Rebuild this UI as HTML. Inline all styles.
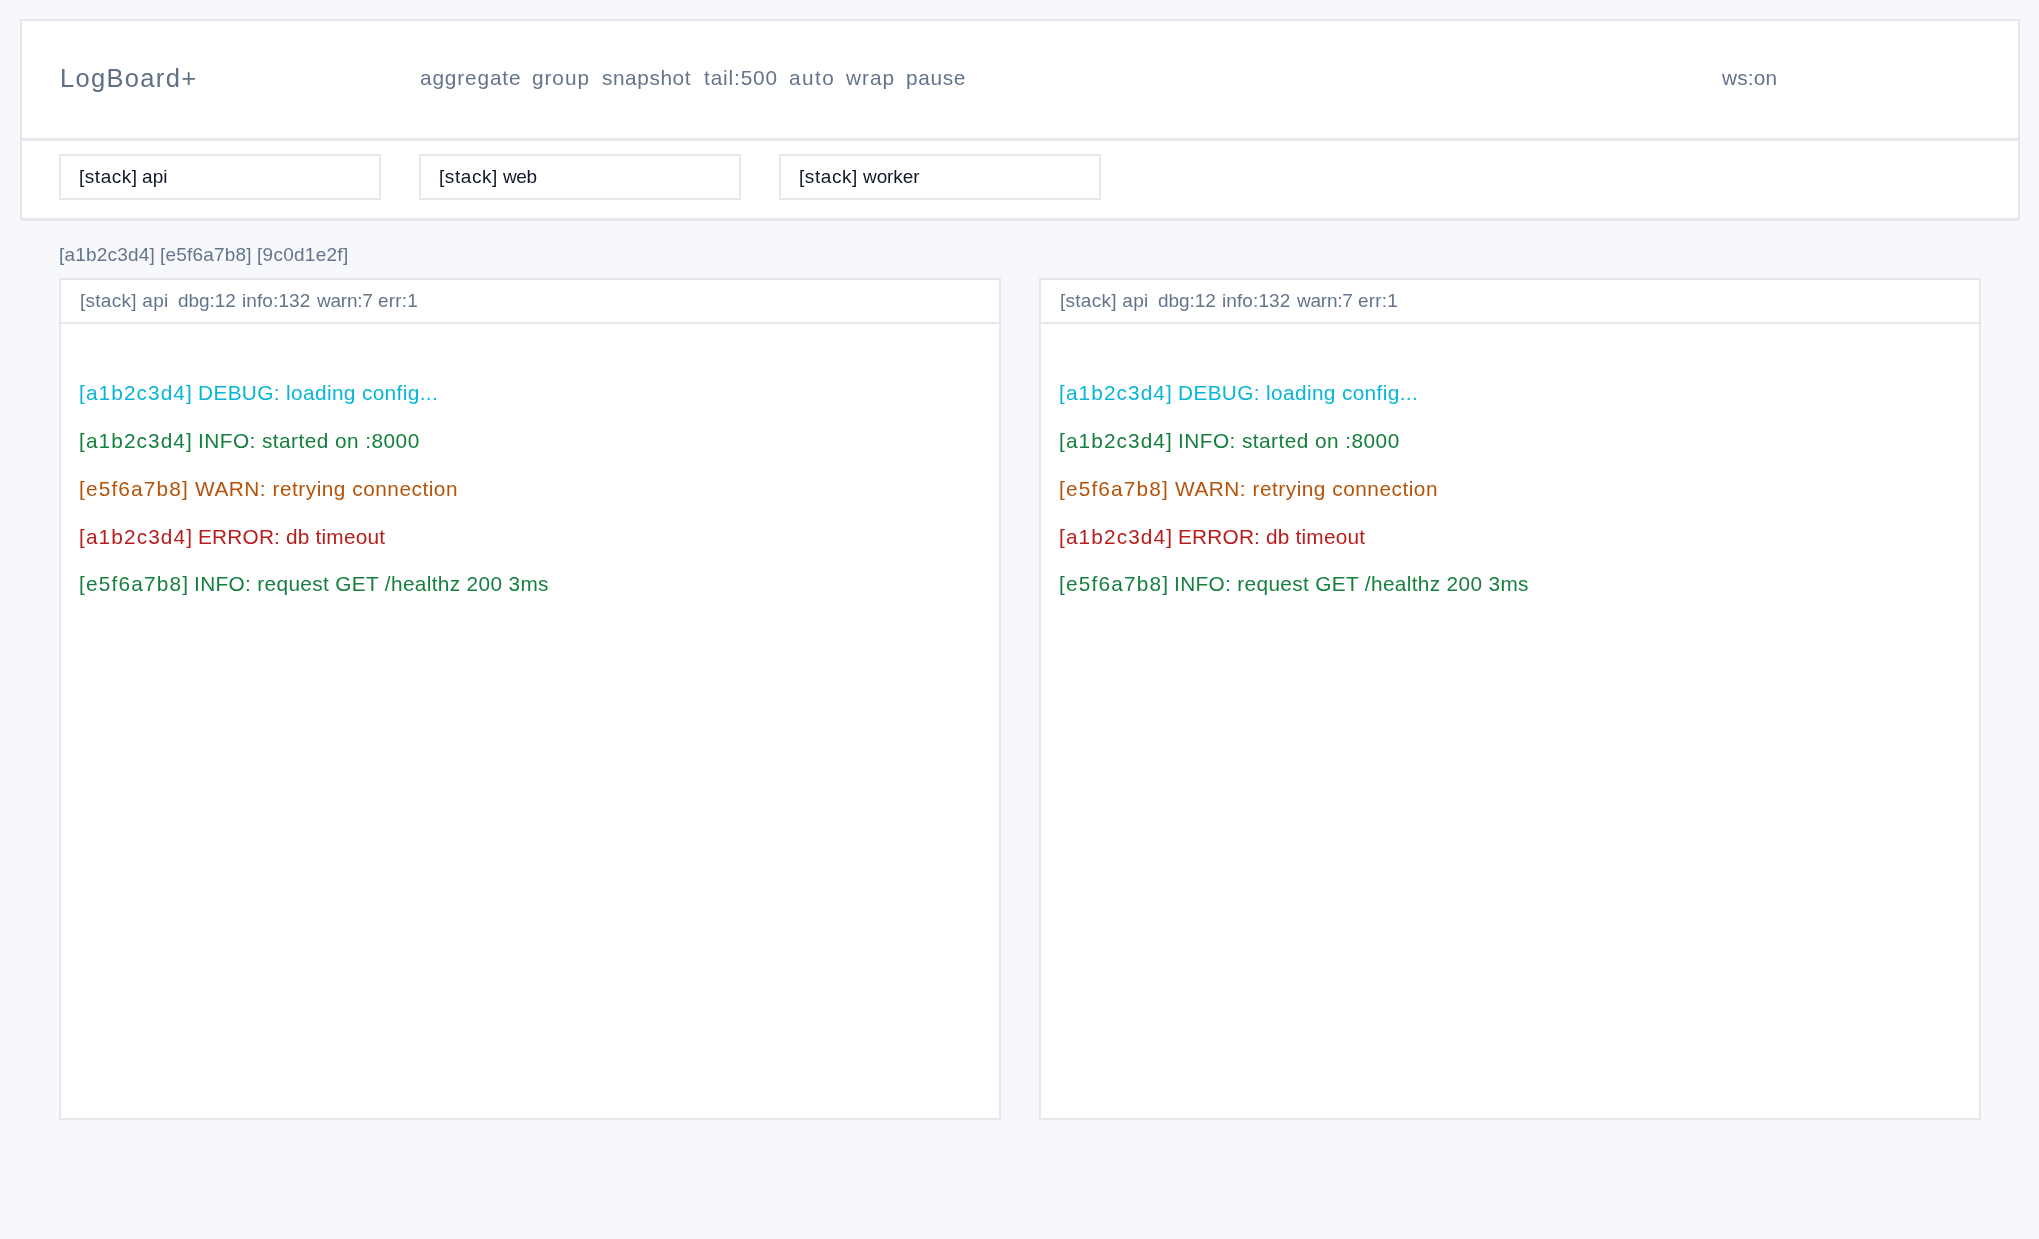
<!DOCTYPE html>
<html lang="en">
<head>
<meta charset="utf-8">
<title>LogBoard+</title>
<style>
  html, body { margin: 0; padding: 0; }
  body {
    width: 2039px; height: 1239px; overflow: hidden; position: relative;
    background: #f7f8fb;
    font-family: "Liberation Sans", sans-serif;
    color: #64748b;
  }
  .t { position: absolute; white-space: pre; line-height: 1; will-change: transform; }
  .card { position: absolute; box-sizing: border-box; background: #ffffff; border: 2px solid #e5e7eb; }
  .hline { position: absolute; height: 2px; background: #e5e7eb; }
  .logo { font-size: 25.5px; color: #5f6f86; }
  .nav { font-size: 20.8px; }
  .inp { position: absolute; box-sizing: border-box; top: 154px; width: 322px; height: 46px; background: #fff; border: 2px solid #e5e7eb; }
  .inp .t { font-size: 19px; color: #111827; }
  .ids { font-size: 19px; }
  .ph { font-size: 19px; }
  .log { font-size: 20.8px; }
  .dbg { color: #06b6d4; }
  .inf { color: #15803d; }
  .wrn { color: #b45309; }
  .err { color: #b91c1c; }
</style>
</head>
<body>
  <!-- header card -->
  <div class="card" style="left:20px; top:19px; width:2000px; height:202px; border-bottom-width:3px;"></div>
  <div class="hline" style="left:20px; top:138px; width:2000px; height:3px;"></div>

  <div class="t logo" id="m-logo" style="left:60.16px; top:66px; letter-spacing:1.32px;">LogBoard+</div>
  <div class="t nav" id="m-nav1" style="left:420px; top:67.8px; letter-spacing:0.86px;">aggregate</div>
  <div class="t nav" id="m-nav2" style="left:532.2px; top:67.8px; letter-spacing:0.94px;">group</div>
  <div class="t nav" id="m-nav3" style="left:601.56px; top:67.8px; letter-spacing:0.58px;">snapshot</div>
  <div class="t nav" id="m-nav4" style="left:703.68px; top:67.8px; letter-spacing:0.86px;">tail:500</div>
  <div class="t nav" id="m-nav5" style="left:789px; top:67.8px; letter-spacing:1.41px;">auto</div>
  <div class="t nav" id="m-nav6" style="left:846.16px; top:67.8px; letter-spacing:1px;">wrap</div>
  <div class="t nav" id="m-nav7" style="left:905.72px; top:67.8px; letter-spacing:0.69px;">pause</div>
  <div class="t nav" id="m-ws" style="left:1721.56px; top:67.8px; letter-spacing:0.16px;">ws:on</div>

  <div class="inp" style="left:59px;"><div class="t" id="m-in1a" style="left:18.04px; top:10.8px; letter-spacing:0.54px;">[stack]</div><div class="t" id="m-in1b" style="left:81.04px; top:10.8px; letter-spacing:0.12px;">api</div></div>
  <div class="inp" style="left:419px;"><div class="t" id="m-in2a" style="left:18.04px; top:10.8px; letter-spacing:0.57px;">[stack]</div><div class="t" id="m-in2b" style="left:82.2px; top:10.8px; letter-spacing:-0.44px;">web</div></div>
  <div class="inp" style="left:779px;"><div class="t" id="m-in3a" style="left:18.04px; top:10.8px; letter-spacing:0.57px;">[stack]</div><div class="t" id="m-in3b" style="left:82.2px; top:10.8px; letter-spacing:-0.09px;">worker</div></div>

  <div class="t ids" id="m-ids1" style="left:59.08px; top:244.8px; letter-spacing:0.2px;">[a1b2c3d4]</div>
  <div class="t ids" id="m-ids2" style="left:160.28px; top:244.8px; letter-spacing:0.18px;">[e5f6a7b8]</div>
  <div class="t ids" id="m-ids3" style="left:257.28px; top:244.8px; letter-spacing:0.27px;">[9c0d1e2f]</div>

  <!-- left panel -->
  <div class="card" style="left:59px; top:278px; width:942px; height:842px;"></div>
  <div class="hline" style="left:59px; top:322px; width:942px;"></div>
  <div class="t ph" id="m-ph1a" style="left:79.68px; top:290.91px; letter-spacing:0.27px;">[stack] api</div>
  <div class="t ph" id="m-ph1w1" style="left:178.28px; top:290.91px; letter-spacing:-0.05px;">dbg:12</div>
  <div class="t ph" id="m-ph1w2" style="left:242.2px; top:290.91px; letter-spacing:0.1px;">info:132</div>
  <div class="t ph" id="m-ph1w3" style="left:317.16px; top:290.91px; letter-spacing:-0.24px;">warn:7</div>
  <div class="t ph" id="m-ph1w4" style="left:378.12px; top:290.91px; letter-spacing:0.17px;">err:1</div>
  <div class="t log dbg" id="m-l1p" style="left:79.12px; top:382.8px; letter-spacing:1.1px;">[a1b2c3d4]</div>
  <div class="t log dbg" id="m-l1m" style="left:197.96px; top:382.8px; letter-spacing:0.37px;">DEBUG: loading config...</div>
  <div class="t log inf" id="m-l2p" style="left:79.12px; top:430.8px; letter-spacing:1.1px;">[a1b2c3d4]</div>
  <div class="t log inf" id="m-l2m" style="left:198.04px; top:430.8px; letter-spacing:0.46px;">INFO: started on :8000</div>
  <div class="t log wrn" id="m-l3p" style="left:79.04px; top:478.71px; letter-spacing:1.17px;">[e5f6a7b8]</div>
  <div class="t log wrn" id="m-l3m" style="left:194.56px; top:478.71px; letter-spacing:0.52px;">WARN: retrying connection</div>
  <div class="t log err" id="m-l4p" style="left:78.96px; top:526.61px; letter-spacing:1.12px;">[a1b2c3d4]</div>
  <div class="t log err" id="m-l4m" style="left:197.88px; top:526.61px; letter-spacing:0.2px;">ERROR: db timeout</div>
  <div class="t log inf" id="m-l5p" style="left:79.12px; top:574.41px; letter-spacing:1.18px;">[e5f6a7b8]</div>
  <div class="t log inf" id="m-l5m" style="left:193.64px; top:574.41px; letter-spacing:0.35px;">INFO: request GET /healthz 200 3ms</div>

  <!-- right panel -->
  <div class="card" style="left:1039px; top:278px; width:942px; height:842px;"></div>
  <div class="hline" style="left:1039px; top:322px; width:942px;"></div>
  <div class="t ph" id="m-ph2a" style="left:1059.68px; top:290.91px; letter-spacing:0.27px;">[stack] api</div>
  <div class="t ph" id="m-ph2w1" style="left:1158.28px; top:290.91px; letter-spacing:-0.05px;">dbg:12</div>
  <div class="t ph" id="m-ph2w2" style="left:1222.2px; top:290.91px; letter-spacing:0.1px;">info:132</div>
  <div class="t ph" id="m-ph2w3" style="left:1297.16px; top:290.91px; letter-spacing:-0.24px;">warn:7</div>
  <div class="t ph" id="m-ph2w4" style="left:1358.12px; top:290.91px; letter-spacing:0.17px;">err:1</div>
  <div class="t log dbg" id="m-r1p" style="left:1059.12px; top:382.8px; letter-spacing:1.1px;">[a1b2c3d4]</div>
  <div class="t log dbg" id="m-r1m" style="left:1177.96px; top:382.8px; letter-spacing:0.37px;">DEBUG: loading config...</div>
  <div class="t log inf" id="m-r2p" style="left:1059.12px; top:430.8px; letter-spacing:1.1px;">[a1b2c3d4]</div>
  <div class="t log inf" id="m-r2m" style="left:1178.04px; top:430.8px; letter-spacing:0.46px;">INFO: started on :8000</div>
  <div class="t log wrn" id="m-r3p" style="left:1059.04px; top:478.71px; letter-spacing:1.17px;">[e5f6a7b8]</div>
  <div class="t log wrn" id="m-r3m" style="left:1174.56px; top:478.71px; letter-spacing:0.52px;">WARN: retrying connection</div>
  <div class="t log err" id="m-r4p" style="left:1058.96px; top:526.61px; letter-spacing:1.12px;">[a1b2c3d4]</div>
  <div class="t log err" id="m-r4m" style="left:1177.88px; top:526.61px; letter-spacing:0.2px;">ERROR: db timeout</div>
  <div class="t log inf" id="m-r5p" style="left:1059.12px; top:574.41px; letter-spacing:1.18px;">[e5f6a7b8]</div>
  <div class="t log inf" id="m-r5m" style="left:1173.64px; top:574.41px; letter-spacing:0.35px;">INFO: request GET /healthz 200 3ms</div>
</body>
</html>
